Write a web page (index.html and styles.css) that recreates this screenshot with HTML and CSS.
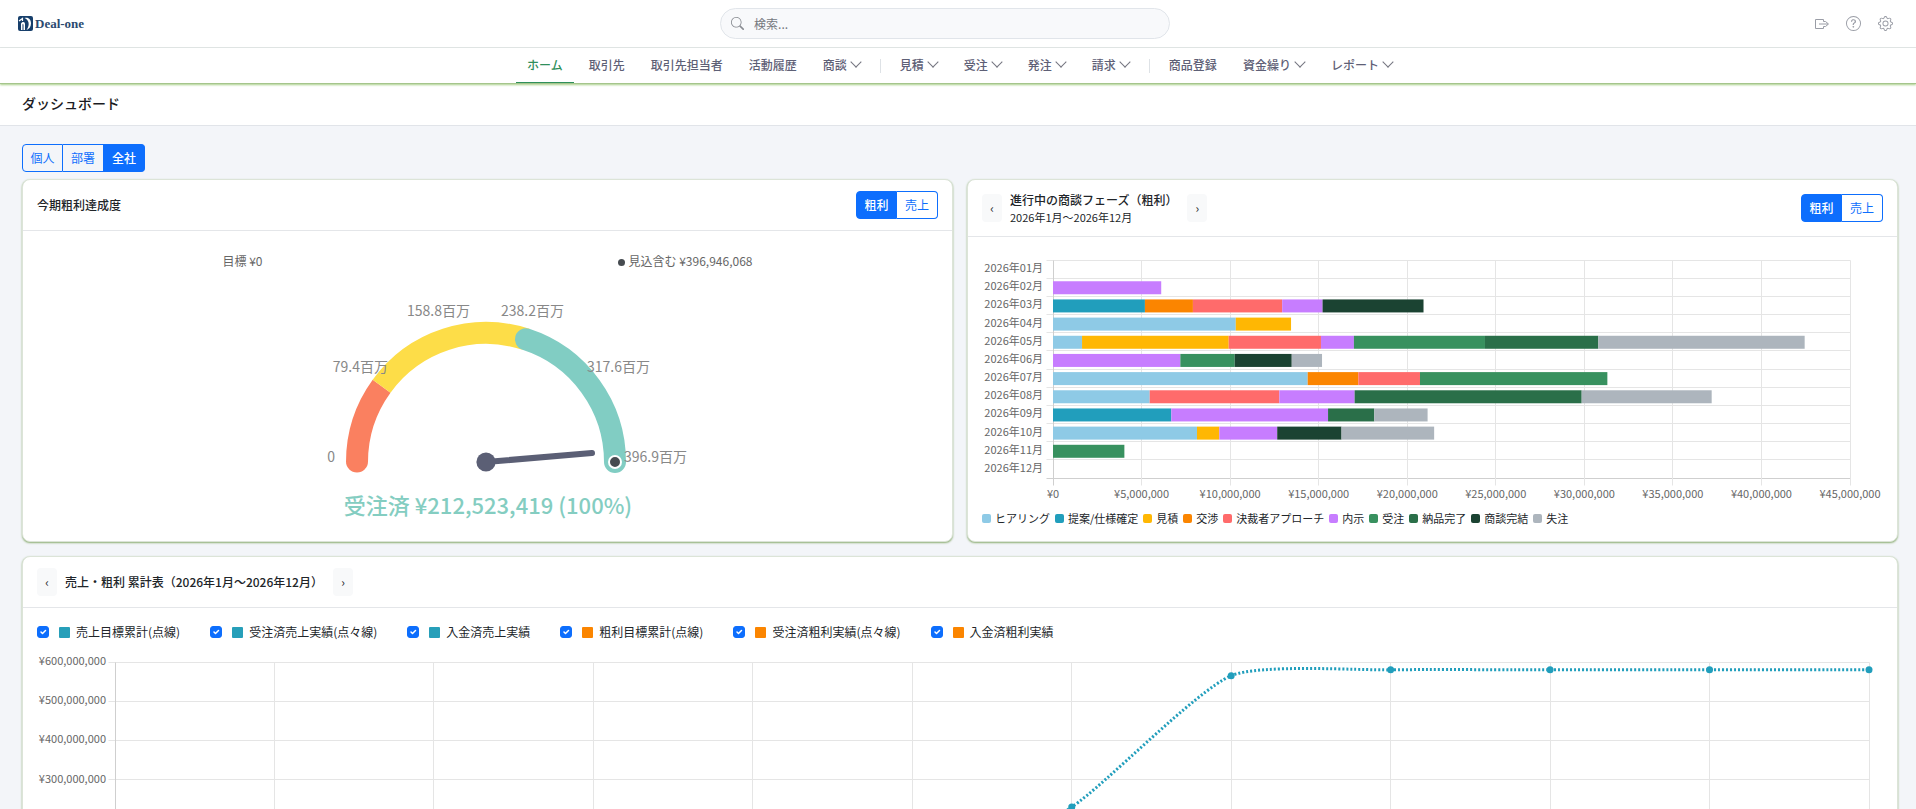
FILE: index.html
```html
<!DOCTYPE html>
<html lang="ja">
<head>
  <meta charset="UTF-8">
  <meta name="viewport" content="width=device-width, initial-scale=1">
  <title>ダッシュボード | Deal-one</title>
  <link rel="stylesheet" href="styles.css">
</head>
<body>
  <!-- Header -->
  <header class="topbar">
    <a href="#" class="logo">
      <svg width="15" height="15" viewBox="0 0 15 15">
        <rect width="15" height="15" rx="2" fill="#173f6b"/>
        <path d="M1 5 4.500 2.500V5" fill="none" stroke="#fff" stroke-width="1.200"/>
        <path d="M6.500 2C11 1 13 4 13 7.500S11 13 8.500 14c2-3 2.500-5 2-7.500S8.500 3 6.500 2z" fill="#fff"/>
        <path d="M3 7.500C5 5 7 6 7 8v6H5.500V8.500L4.500 8v6H3z" fill="#fff"/>
      </svg>
      <span>Deal-one</span>
    </a>
    <form class="search">
      <svg class="icon" width="13" height="13" viewBox="0 0 16 16"><path d="M11.742 10.344a6.500 6.500 0 1 0-1.397 1.398h-.001q.044.06.098.115l3.850 3.850a1 1 0 0 0 1.415-1.414l-3.850-3.850a1 1 0 0 0-.115-.1zM12 6.500a5.500 5.500 0 1 1-11 0 5.500 5.500 0 0 1 11 0"/></svg>
      <input type="search" placeholder="検索..." aria-label="検索">
    </form>
    <div class="actions">
      <button type="button" aria-label="ログアウト">
        <svg class="line" width="16" height="16" viewBox="0 0 16 16"><path d="M9.500 5.500v-2h-8v9h8v-2M5 8h9M9.500 5.500h2L14.500 8l-3 2.500h-2"/></svg>
      </button>
      <button type="button" aria-label="ヘルプ">
        <svg width="15" height="15" viewBox="0 0 16 16"><path d="M8 15A7 7 0 1 1 8 1a7 7 0 0 1 0 14m0 1A8 8 0 1 0 8 0a8 8 0 0 0 0 16"/><path d="M5.255 5.786a.237.237 0 0 0 .241.247h.825c.138 0 .248-.113.266-.250.090-.656.540-1.134 1.342-1.134.686 0 1.314.343 1.314 1.168 0 .635-.374.927-.965 1.371-.673.489-1.206 1.060-1.168 1.987l.003.217a.250.250 0 0 0 .250.246h.811a.250.250 0 0 0 .250-.250v-.105c0-.718.273-.927 1.010-1.486.609-.463 1.244-.977 1.244-2.056 0-1.511-1.276-2.241-2.673-2.241-1.267 0-2.655.590-2.750 2.286m1.557 5.763c0 .533.425.927 1.010.927.609 0 1.028-.394 1.028-.927 0-.552-.420-.940-1.029-.940-.584 0-1.009.388-1.009.940"/></svg>
      </button>
      <button type="button" aria-label="設定">
        <svg width="15" height="15" viewBox="0 0 16 16"><path d="M8 4.754a3.246 3.246 0 1 0 0 6.492 3.246 3.246 0 0 0 0-6.492M5.754 8a2.246 2.246 0 1 1 4.492 0 2.246 2.246 0 0 1-4.492 0"/><path d="M9.796 1.343c-.527-1.790-3.065-1.790-3.592 0l-.094.319a.873.873 0 0 1-1.255.520l-.292-.160c-1.640-.892-3.433.902-2.540 2.541l.159.292a.873.873 0 0 1-.520 1.255l-.319.094c-1.790.527-1.790 3.065 0 3.592l.319.094a.873.873 0 0 1 .520 1.255l-.160.292c-.892 1.640.901 3.434 2.541 2.540l.292-.159a.873.873 0 0 1 1.255.520l.094.319c.527 1.790 3.065 1.790 3.592 0l.094-.319a.873.873 0 0 1 1.255-.520l.292.160c1.640.893 3.434-.902 2.540-2.541l-.159-.292a.873.873 0 0 1 .520-1.255l.319-.094c1.790-.527 1.790-3.065 0-3.592l-.319-.094a.873.873 0 0 1-.520-1.255l.160-.292c.893-1.640-.902-3.433-2.541-2.540l-.292.159a.873.873 0 0 1-1.255-.520zm-2.633.283c.246-.835 1.428-.835 1.674 0l.094.319a1.873 1.873 0 0 0 2.693 1.115l.291-.160c.764-.415 1.600.420 1.184 1.185l-.159.292a1.873 1.873 0 0 0 1.116 2.692l.318.094c.835.246.835 1.428 0 1.674l-.319.094a1.873 1.873 0 0 0-1.115 2.693l.160.291c.415.764-.420 1.600-1.185 1.184l-.291-.159a1.873 1.873 0 0 0-2.693 1.116l-.094.318c-.246.835-1.428.835-1.674 0l-.094-.319a1.873 1.873 0 0 0-2.692-1.115l-.292.160c-.764.415-1.600-.420-1.184-1.185l.159-.291A1.873 1.873 0 0 0 1.945 8.930l-.319-.094c-.835-.246-.835-1.428 0-1.674l.319-.094A1.873 1.873 0 0 0 3.060 4.377l-.160-.292c-.415-.764.420-1.600 1.185-1.184l.292.159a1.873 1.873 0 0 0 2.692-1.115z"/></svg>
      </button>
    </div>
  </header>

  <!-- Main nav -->
  <nav class="mainnav">
    <a href="#" class="active">ホーム</a>
    <a href="#">取引先</a>
    <a href="#">取引先担当者</a>
    <a href="#">活動履歴</a>
    <a href="#" class="drop">商談</a>
    <span class="sep"></span>
    <a href="#" class="drop">見積</a>
    <a href="#" class="drop">受注</a>
    <a href="#" class="drop">発注</a>
    <a href="#" class="drop">請求</a>
    <span class="sep"></span>
    <a href="#">商品登録</a>
    <a href="#" class="drop">資金繰り</a>
    <a href="#" class="drop">レポート</a>
  </nav>

  <h1 class="page-title">ダッシュボード</h1>

  <main>
    <div class="btn-group">
      <button type="button">個人</button>
      <button type="button">部署</button>
      <button type="button" class="active">全社</button>
    </div>

    <div class="cards">
      <!-- Gauge -->
      <section class="card">
        <div class="card-header">
          <h2>今期粗利達成度</h2>
          <div class="btn-group">
            <button type="button" class="active">粗利</button>
            <button type="button">売上</button>
          </div>
        </div>
        <div class="card-body">
          <div class="gauge-info">
            <span>目標 ¥0</span>
            <span class="dot">見込含む ¥396,946,068</span>
          </div>
          <svg class="gauge" width="404" height="240" viewBox="0 0 404 240">
            <g fill="none" stroke-width="22">
              <path d="M71 176A129 129 0 0 1 95.600 100.200" stroke="#fa8060"/>
              <path d="M95.600 100.200A129 129 0 0 1 239.900 53.300" stroke="#fddd48"/>
              <path d="M239.900 53.300A129 129 0 0 1 329 176" stroke="#81cdc3" stroke-linecap="round"/>
            </g>
            <path d="M60 175.500h22a11 11 0 0 1-22 0z" fill="#fa8060"/>
            <path d="M200 176 306 167" stroke="#5b5f75" stroke-width="6" stroke-linecap="round"/>
            <circle cx="200" cy="176" r="9.600" fill="#5b5f75"/>
            <circle cx="329" cy="176" r="6" fill="#464b50" stroke="#fff" stroke-width="2"/>
            <g class="gauge-label">
              <text x="49" y="176" text-anchor="end">0</text>
              <text x="102" y="86" text-anchor="end">79.4百万</text>
              <text x="184" y="30" text-anchor="end">158.8百万</text>
              <text x="215" y="30">238.2百万</text>
              <text x="301" y="86">317.6百万</text>
              <text x="338" y="176">396.9百万</text>
            </g>
            <text class="gauge-total" x="202" y="228" text-anchor="middle">受注済 ¥212,523,419 (100%)</text>
          </svg>
        </div>
      </section>

      <!-- Phase chart -->
      <section class="card">
        <div class="card-header">
          <div class="pager">
            <button type="button" aria-label="前へ">‹</button>
            <div>
              <h2>進行中の商談フェーズ（粗利）</h2>
              <p>2026年1月～2026年12月</p>
            </div>
            <button type="button" aria-label="次へ">›</button>
          </div>
          <div class="btn-group">
            <button type="button" class="active">粗利</button>
            <button type="button">売上</button>
          </div>
        </div>
        <div class="card-body">
          <svg class="chart phase-chart" id="phaseChart"></svg>
          <ul class="legend" id="phaseLegend"></ul>
        </div>
      </section>
    </div>

    <!-- Cumulative chart -->
    <section class="card">
      <div class="card-header">
        <div class="pager">
          <button type="button" aria-label="前へ">‹</button>
          <h2>売上・粗利 累計表（2026年1月～2026年12月）</h2>
          <button type="button" aria-label="次へ">›</button>
        </div>
      </div>
      <div class="card-body">
        <div class="series">
          <label><input type="checkbox" checked><i class="sales"></i>売上目標累計(点線)</label>
          <label><input type="checkbox" checked><i class="sales"></i>受注済売上実績(点々線)</label>
          <label><input type="checkbox" checked><i class="sales"></i>入金済売上実績</label>
          <label><input type="checkbox" checked><i class="profit"></i>粗利目標累計(点線)</label>
          <label><input type="checkbox" checked><i class="profit"></i>受注済粗利実績(点々線)</label>
          <label><input type="checkbox" checked><i class="profit"></i>入金済粗利実績</label>
        </div>
        <svg class="chart total-chart" id="totalChart"></svg>
      </div>
    </section>
  </main>

  <script src="charts.js"></script>
</body>
</html>
```
FILE: styles.css
```css
* {
  box-sizing: border-box;
}
body {
  display: flex;
  flex-direction: column;
  height: 100vh;
  margin: 0;
  overflow: hidden;
  background: #f3f5f9;
  color: #212529;
  font-family: "Noto Sans CJK JP", sans-serif;
  font-size: 12px;
  line-height: 18px;
}
button, input {
  font: inherit;
}
h1, h2, p, ul {
  margin: 0;
  padding: 0;
}
a {
  text-decoration: none;
}

/* header */
.topbar {
  display: flex;
  flex: none;
  align-items: center;
  justify-content: space-between;
  height: 48px;
  padding: 0 14px 0 18px;
  background: #fff;
  border-bottom: 1px solid #e4e6ea;
}
.logo {
  display: flex;
  align-items: center;
  gap: 2px;
  color: #2b4a70;
  font: bold 13px/18px "Liberation Serif", serif;
}
.search {
  display: flex;
  align-items: center;
  gap: 10px;
  width: 450px;
  height: 31px;
  padding: 0 10px;
  background: #f8f9fb;
  border: 1px solid #e1e5ea;
  border-radius: 16px;
}
.search .icon {
  fill: #8a8d93;
}
.search input {
  flex: 1;
  padding: 0;
  border: 0;
  outline: 0;
  background: none;
}
.search input::placeholder {
  color: #75787e;
}
.actions {
  display: flex;
}
.actions button {
  display: flex;
  align-items: center;
  justify-content: center;
  width: 32px;
  height: 32px;
  padding: 0;
  border: 0;
  background: none;
  color: #9a9da6;
}
.actions svg {
  fill: currentColor;
}
.actions .line {
  fill: none;
  stroke: currentColor;
}

/* nav */
.mainnav {
  display: flex;
  flex: none;
  align-items: stretch;
  justify-content: center;
  gap: 4px;
  height: 36px;
  padding-left: 4px;
  position: relative;
  background: #fff;
  border-bottom: 1px solid #a5c58c;
  box-shadow: 0 1px 2px #a9cf8a;
}
.mainnav a {
  display: flex;
  align-items: center;
  gap: 3px;
  padding: 0 11px;
  border-bottom: 1px solid transparent;
  color: #5e6076;
  font-weight: 500;
}
.mainnav a.active {
  color: #2f8f5b;
  border-bottom-color: #2f8f5b;
}
.mainnav .drop::after {
  content: "";
  width: 7px;
  height: 7px;
  margin: -6px 1px 0 2px;
  border: solid #74757f;
  border-width: 0 1px 1px 0;
  transform: rotate(45deg);
}
.mainnav .sep {
  align-self: center;
  width: 1px;
  height: 14px;
  margin: 0 4px;
  background: #dee2e6;
}

.page-title {
  flex: none;
  height: 42px;
  padding: 0 22px;
  background: #fff;
  border-bottom: 1px solid #e1e4e9;
  color: #1b1b22;
  font-size: 14px;
  font-weight: 500;
  line-height: 38px;
}

/* content */
main {
  flex: 1;
  overflow-y: auto;
  scrollbar-width: none;
  padding: 18px 18px 18px 22px;
}
.cards {
  display: grid;
  grid-template-columns: 1fr 1fr;
  gap: 14px;
  margin: 7px 0 14px;
}
.card {
  background: #fff;
  border: 1px solid #dce4d8;
  border-radius: 8px;
  box-shadow: 0 1px 2px #8dae74;
}
.card-header {
  display: flex;
  align-items: center;
  justify-content: space-between;
  padding: 11px 14px;
  border-bottom: 1px solid #e4e6e9;
}
.card-header h2 {
  font-size: 12px;
  font-weight: 500;
  line-height: 18px;
}
.card-header p {
  font-size: 11px;
  line-height: 16px;
}
.card-body {
  padding: 15px 14px;
}

.btn-group {
  display: flex;
}
.btn-group button {
  width: 41px;
  height: 28px;
  padding: 0;
  background: none;
  border: 1px solid #0d6efd;
  color: #0d6efd;
}
.btn-group button + button {
  border-left: 0;
}
.btn-group button:first-child {
  border-radius: 4px 0 0 4px;
}
.btn-group button:last-child {
  border-radius: 0 4px 4px 0;
}
.btn-group .active {
  background: #0d6efd;
  color: #fff;
  font-weight: 500;
}

.pager {
  display: flex;
  align-items: center;
  gap: 8px;
}
.pager button {
  width: 20px;
  height: 28px;
  padding: 0;
  border: 0;
  border-radius: 4px;
  background: #f8f9fa;
  color: #212529;
}
.pager button:last-child {
  margin-left: 2px;
}

/* gauge */
.gauge-info {
  display: flex;
  justify-content: space-around;
  padding: 6px 8px 0;
  color: #666;
}
.gauge-info .dot::before {
  content: "";
  display: inline-block;
  width: 7px;
  height: 7px;
  margin-right: 4px;
  border-radius: 50%;
  background: #464b50;
}
.gauge {
  display: block;
  margin: 16px auto 0;
  overflow: visible;
}
.gauge-label {
  fill: #888;
  font-size: 14px;
}
.gauge-total {
  fill: #84cdc1;
  font-size: 22px;
  font-weight: 500;
}

/* charts */
.chart {
  display: block;
  width: 100%;
  overflow: visible;
  font-size: 11px;
}
.chart text {
  fill: #666;
}
.chart .grid {
  stroke: #e5e5e5;
}
.chart .axis {
  stroke: #cfcfcf;
}
.phase-chart {
  height: 258px;
}
.total-chart {
  height: 270px;
}
.legend {
  display: flex;
  flex-wrap: wrap;
  gap: 5px;
  font-size: 11px;
  line-height: 16px;
  list-style: none;
}
.legend li {
  display: flex;
  align-items: center;
  gap: 4px;
}
.legend i {
  width: 9px;
  height: 9px;
  border-radius: 2px;
}

.series {
  display: flex;
  flex-wrap: wrap;
  gap: 30px;
}
.series label {
  display: flex;
  align-items: center;
}
.series input {
  appearance: none;
  width: 12px;
  height: 12px;
  margin: 0 10px 0 0;
  border: 1px solid #adb5bd;
  border-radius: 3px;
}
.series input:checked {
  border-color: #0d6efd;
  background: #0d6efd url("data:image/svg+xml,%3Csvg xmlns='http://www.w3.org/2000/svg' viewBox='0 0 20 20'%3E%3Cpath fill='none' stroke='%23fff' stroke-linecap='round' stroke-linejoin='round' stroke-width='3' d='m6 10 3 3 6-6'/%3E%3C/svg%3E");
}
.series i {
  width: 11px;
  height: 11px;
  margin-right: 6px;
  border-radius: 1px;
}
.sales {
  background: #279fb9;
}
.profit {
  background: #fb8500;
}
```
FILE: charts.js
```js
const NS = 'http://www.w3.org/2000/svg';

// [name, color]
const phases = [
  ['ヒアリング', '#8ecae6'],
  ['提案/仕様確定', '#219ebc'],
  ['見積', '#ffb703'],
  ['交渉', '#fb8500'],
  ['決裁者アプローチ', '#ff6b6b'],
  ['内示', '#c77dff'],
  ['受注', '#38915f'],
  ['納品完了', '#2a6f49'],
  ['商談完結', '#1b4332'],
  ['失注', '#adb5bd']
];

// 万円, [phase index, value]
const months = [
  [],
  [[5, 611]],
  [[1, 519], [3, 271], [4, 504], [5, 228], [8, 570]],
  [[0, 1032], [2, 312]],
  [[0, 164], [2, 828], [4, 521], [5, 186], [6, 740], [7, 640], [9, 1165]],
  [[5, 719], [6, 307], [8, 322], [9, 171]],
  [[0, 1438], [3, 286], [4, 348], [6, 1058]],
  [[0, 546], [4, 732], [5, 425], [7, 1282], [9, 734]],
  [[1, 668], [5, 885], [7, 261], [9, 301]],
  [[0, 813], [2, 126], [5, 327], [8, 363], [9, 523]],
  [[6, 403]],
  []
];

// 百万円
const totals = [0, 0, 0, 0, 10, 20, 230, 565, 580, 580, 580, 580];

function add(svg, tag, attrs, text) {
  const el = document.createElementNS(NS, tag);
  for (const k in attrs) el.setAttribute(k, attrs[k]);
  if (text) el.textContent = text;
  svg.appendChild(el);
}

function line(svg, x1, y1, x2, y2, cls) {
  const snap = v => Math.floor(v) + 0.5;
  add(svg, 'line', { x1: snap(x1), y1: snap(y1), x2: snap(x2), y2: snap(y2), class: cls });
}

function yen(n) {
  return '¥' + n.toLocaleString('en-US');
}

function drawPhases() {
  const svg = document.getElementById('phaseChart');
  svg.innerHTML = '';
  const left = 71, top = 8, rowH = 18.17;
  const w = svg.clientWidth - left - 33;
  const bottom = top + rowH * 12;

  for (let i = 0; i <= 12; i++) {
    line(svg, left - 7, top + rowH * i, left + w, top + rowH * i, i === 12 ? 'axis' : 'grid');
  }
  for (let i = 0; i <= 9; i++) {
    const x = left + w * i / 9;
    line(svg, x, top, x, bottom + 7, i === 0 ? 'axis' : 'grid');
    add(svg, 'text', { x: x, y: bottom + 20, 'text-anchor': 'middle' }, yen(i * 5000000));
  }
  months.forEach((bars, m) => {
    const mid = top + rowH * (m + 0.5);
    const label = '2026年' + String(m + 1).padStart(2, '0') + '月';
    add(svg, 'text', { x: left - 10, y: mid + 3, 'text-anchor': 'end' }, label);
    let x = left;
    bars.forEach(([p, v]) => {
      const bw = v / 4500 * w;
      add(svg, 'rect', { x: x, y: mid - 6, width: bw, height: 13, fill: phases[p][1] });
      x += bw;
    });
  });
}

function drawTotals() {
  const svg = document.getElementById('totalChart');
  svg.innerHTML = '';
  const left = 78, top = 21, rowH = 39.2;
  const w = svg.clientWidth - left - 14;
  const bottom = top + rowH * 6;

  for (let i = 0; i <= 6; i++) {
    const y = top + rowH * i;
    line(svg, left - 7, y, left + w, y, i === 6 ? 'axis' : 'grid');
    if (i < 4) {
      add(svg, 'text', { x: left - 9, y: y + 3, 'text-anchor': 'end' }, yen((6 - i) * 100000000));
    }
  }
  const pts = totals.map((v, i) => [left + w * i / 11, bottom - v / 100 * rowH]);
  pts.forEach(([x], i) => line(svg, x, top, x, bottom + 7, i === 0 ? 'axis' : 'grid'));

  // smoothed curve, control points from the neighbours
  const t = 0.2;
  const ctrl = pts.map((p, i) => {
    const a = pts[i - 1] || p, b = pts[i + 1] || p;
    const d1 = Math.hypot(p[0] - a[0], p[1] - a[1]);
    const d2 = Math.hypot(b[0] - p[0], b[1] - p[1]);
    const f1 = t * d1 / (d1 + d2), f2 = t * d2 / (d1 + d2);
    const dx = b[0] - a[0], dy = b[1] - a[1];
    return [p[0] - f1 * dx, p[1] - f1 * dy, p[0] + f2 * dx, p[1] + f2 * dy];
  });
  let d = 'M' + pts[0];
  for (let i = 1; i < pts.length; i++) {
    d += 'C' + [ctrl[i - 1][2], ctrl[i - 1][3], ctrl[i][0], ctrl[i][1], pts[i][0], pts[i][1]];
  }
  add(svg, 'path', { d: d, fill: 'none', stroke: '#219ebc', 'stroke-width': 3, 'stroke-dasharray': '2 2' });
  pts.forEach(([x, y]) => add(svg, 'circle', { cx: x, cy: y, r: 3.5, fill: '#219ebc' }));
}

document.getElementById('phaseLegend').innerHTML = phases
  .map(([name, color]) => `<li><i style="background:${color}"></i>${name}</li>`)
  .join('');

function draw() {
  drawPhases();
  drawTotals();
}
draw();
window.addEventListener('resize', draw);
```
